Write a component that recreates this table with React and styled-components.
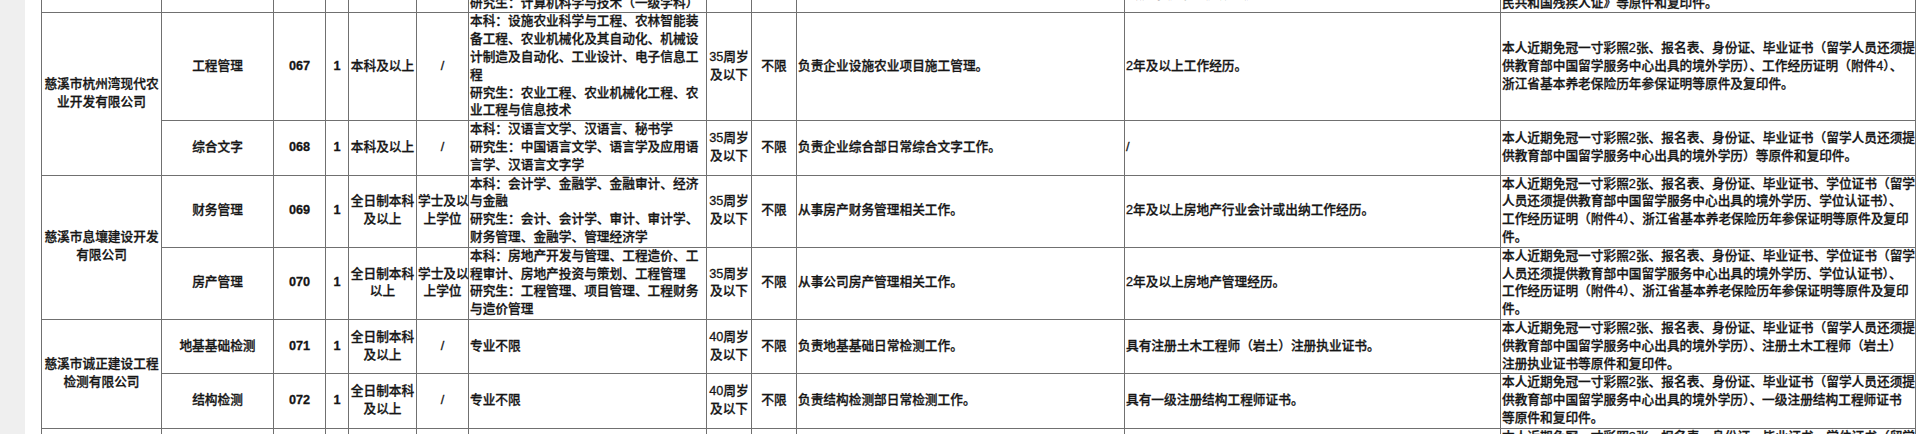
import React from "react";
import styled, { createGlobalStyle } from "styled-components";

const Global = createGlobalStyle`
  html, body { margin: 0; padding: 0; background: #ffffff; }
  body { font-family: "Liberation Sans", "Noto Sans CJK SC", sans-serif; }
`;

const Page = styled.div`
  display: flex;
  height: 434px;
  overflow: hidden;
  background: #ffffff;
`;

const Gutter = styled.div`
  flex: 0 0 25px;
  background: #efefef;
`;

const Sheet = styled.div`
  flex: 1 1 auto;
  padding-left: 16px;
  overflow: hidden;
`;

const Table = styled.table`
  border-collapse: collapse;
  table-layout: fixed;
  width: 1875px;
  margin-top: -42px;
  color: #151515;
  font-size: 12.7px;
  line-height: 17.8px;
  font-weight: 500;
  -webkit-text-stroke: 0.3px #151515;
`;

const Cell = styled.td`
  border: 1px solid #707070;
  padding: 0 1px;
  vertical-align: middle;
  text-align: ${(p) => p.$align || "center"};
  font-weight: ${(p) => (p.$bold ? 700 : 500)};
  overflow: visible;
`;

const Line = styled.span`
  display: block;
  white-space: nowrap;
`;

const widths = [120, 112, 52, 23, 68, 52, 238, 45, 45, 328, 376, 415];

const Lines = ({ v }) =>
  (Array.isArray(v) ? v : [v]).map((t, i) => <Line key={i}>{t}</Line>);

const REMARK_A = [
  "本人近期免冠一寸彩照2张、报名表、身份证、毕业证书（留学人员还须提",
  "供教育部中国留学服务中心出具的境外学历）、工作经历证明（附件4）、",
  "浙江省基本养老保险历年参保证明等原件及复印件。",
];
const REMARK_DEG = [
  "本人近期免冠一寸彩照2张、报名表、身份证、毕业证书、学位证书（留学",
  "人员还须提供教育部中国留学服务中心出具的境外学历、学位认证书）、",
  "工作经历证明（附件4）、浙江省基本养老保险历年参保证明等原件及复印",
  "件。",
];

const rows = [
  {
    company: { lines: [""], span: 1 },
    position: "",
    code: "",
    count: "",
    edu: "",
    degree: "",
    major: [
      "本科：计算机科学与技术、软件工程、网",
      "络工程、数据科学与大数据技术",
      "研究生：计算机科学与技术（一级学科）",
    ],
    age: ["35周岁", "及以下"],
    limit: "",
    desc: "",
    req: ["持有《中华人民共和国残疾人证》，", "残疾等级为三级或四级。"],
    remarks: [
      "本人近期免冠一寸彩照2张、报名表、身份证、毕业证书（留学人员还须提",
      "供教育部中国留学服务中心出具的境外学历）、《中华人",
      "民共和国残疾人证》等原件和复印件。",
    ],
  },
  {
    company: { lines: ["慈溪市杭州湾现代农", "业开发有限公司"], span: 2 },
    position: "工程管理",
    code: "067",
    count: "1",
    edu: "本科及以上",
    degree: "/",
    major: [
      "本科：设施农业科学与工程、农林智能装",
      "备工程、农业机械化及其自动化、机械设",
      "计制造及自动化、工业设计、电子信息工",
      "程",
      "研究生：农业工程、农业机械化工程、农",
      "业工程与信息技术",
    ],
    age: ["35周岁", "及以下"],
    limit: "不限",
    desc: "负责企业设施农业项目施工管理。",
    req: "2年及以上工作经历。",
    remarks: REMARK_A,
  },
  {
    position: "综合文字",
    code: "068",
    count: "1",
    edu: "本科及以上",
    degree: "/",
    major: [
      "本科：汉语言文学、汉语言、秘书学",
      "研究生：中国语言文学、语言学及应用语",
      "言学、汉语言文字学",
    ],
    age: ["35周岁", "及以下"],
    limit: "不限",
    desc: "负责企业综合部日常综合文字工作。",
    req: "/",
    remarks: [
      "本人近期免冠一寸彩照2张、报名表、身份证、毕业证书（留学人员还须提",
      "供教育部中国留学服务中心出具的境外学历）等原件和复印件。",
    ],
  },
  {
    company: { lines: ["慈溪市息壤建设开发", "有限公司"], span: 2 },
    position: "财务管理",
    code: "069",
    count: "1",
    edu: ["全日制本科", "及以上"],
    degree: ["学士及以", "上学位"],
    major: [
      "本科：会计学、金融学、金融审计、经济",
      "与金融",
      "研究生：会计、会计学、审计、审计学、",
      "财务管理、金融学、管理经济学",
    ],
    age: ["35周岁", "及以下"],
    limit: "不限",
    desc: "从事房产财务管理相关工作。",
    req: "2年及以上房地产行业会计或出纳工作经历。",
    remarks: REMARK_DEG,
  },
  {
    position: "房产管理",
    code: "070",
    count: "1",
    edu: ["全日制本科", "以上"],
    degree: ["学士及以", "上学位"],
    major: [
      "本科：房地产开发与管理、工程造价、工",
      "程审计、房地产投资与策划、工程管理",
      "研究生：工程管理、项目管理、工程财务",
      "与造价管理",
    ],
    age: ["35周岁", "及以下"],
    limit: "不限",
    desc: "从事公司房产管理相关工作。",
    req: "2年及以上房地产管理经历。",
    remarks: REMARK_DEG,
  },
  {
    company: { lines: ["慈溪市诚正建设工程", "检测有限公司"], span: 2 },
    position: "地基基础检测",
    code: "071",
    count: "1",
    edu: ["全日制本科", "及以上"],
    degree: "/",
    major: "专业不限",
    age: ["40周岁", "及以下"],
    limit: "不限",
    desc: "负责地基基础日常检测工作。",
    req: "具有注册土木工程师（岩土）注册执业证书。",
    remarks: [
      "本人近期免冠一寸彩照2张、报名表、身份证、毕业证书（留学人员还须提",
      "供教育部中国留学服务中心出具的境外学历）、注册土木工程师（岩土）",
      "注册执业证书等原件和复印件。",
    ],
  },
  {
    position: "结构检测",
    code: "072",
    count: "1",
    edu: ["全日制本科", "及以上"],
    degree: "/",
    major: "专业不限",
    age: ["40周岁", "及以下"],
    limit: "不限",
    desc: "负责结构检测部日常检测工作。",
    req: "具有一级注册结构工程师证书。",
    remarks: [
      "本人近期免冠一寸彩照2张、报名表、身份证、毕业证书（留学人员还须提",
      "供教育部中国留学服务中心出具的境外学历）、一级注册结构工程师证书",
      "等原件和复印件。",
    ],
  },
  {
    company: { lines: ["慈溪市城市建设投资", "集团有限公司"], span: 1 },
    position: "工程造价",
    code: "073",
    count: "1",
    edu: ["全日制本科", "及以上"],
    degree: ["学士及以", "上学位"],
    major: ["本科：工程造价、工程管理", "研究生：工程管理"],
    age: ["35周岁", "及以下"],
    limit: "不限",
    desc: "负责工程项目造价管理工作。",
    req: "2年及以上工程造价工作经历。",
    remarks: REMARK_DEG,
  },
];

export default function App() {
  return (
    <>
      <Global />
      <Page>
        <Gutter />
        <Sheet>
          <Table>
            <colgroup>
              {widths.map((w, i) => (
                <col key={i} style={{ width: w }} />
              ))}
            </colgroup>
            <tbody>
              {rows.map((r, i) => (
                <tr key={i}>
                  {r.company && (
                    <Cell rowSpan={r.company.span}>
                      <Lines v={r.company.lines} />
                    </Cell>
                  )}
                  <Cell>{r.position}</Cell>
                  <Cell $bold>{r.code}</Cell>
                  <Cell $bold>{r.count}</Cell>
                  <Cell>
                    <Lines v={r.edu} />
                  </Cell>
                  <Cell>
                    <Lines v={r.degree} />
                  </Cell>
                  <Cell $align="left">
                    <Lines v={r.major} />
                  </Cell>
                  <Cell>
                    <Lines v={r.age} />
                  </Cell>
                  <Cell>{r.limit}</Cell>
                  <Cell $align="left">{r.desc}</Cell>
                  <Cell $align="left">
                    <Lines v={r.req} />
                  </Cell>
                  <Cell $align="left">
                    <Lines v={r.remarks} />
                  </Cell>
                </tr>
              ))}
            </tbody>
          </Table>
        </Sheet>
      </Page>
    </>
  );
}
